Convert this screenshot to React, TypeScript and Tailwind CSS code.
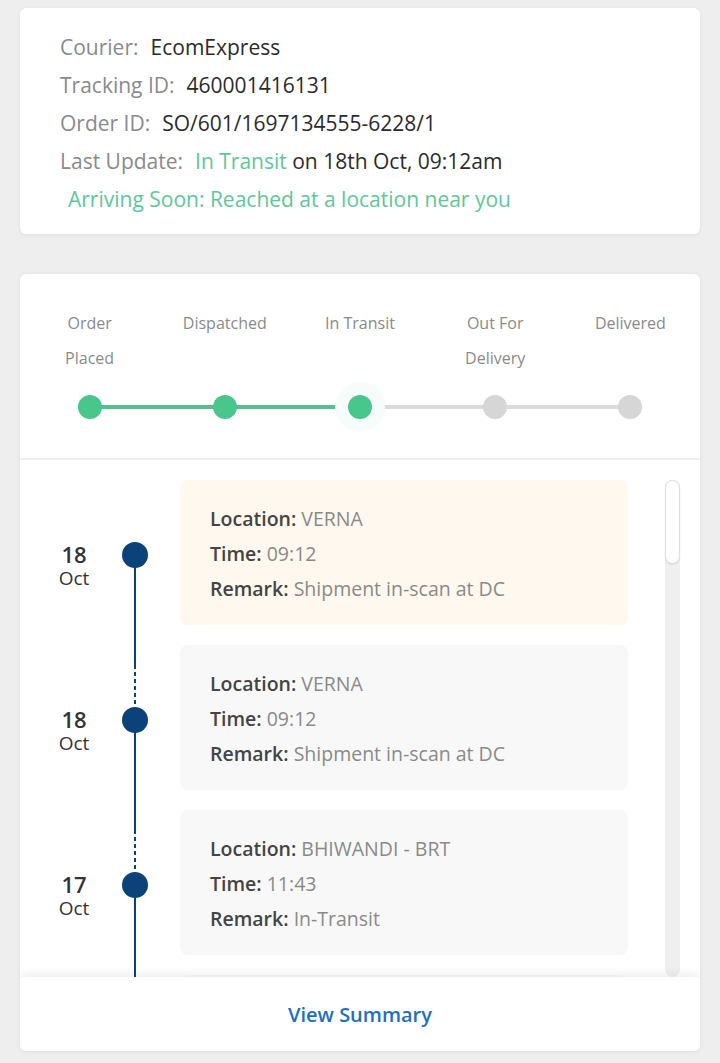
const steps = [
  ["Order", "Placed"],
  ["Dispatched"],
  ["In Transit"],
  ["Out For", "Delivery"],
  ["Delivered"],
];

const current = 2;

const events = [
  { day: "18", month: "Oct", location: "VERNA", time: "09:12", remark: "Shipment in-scan at DC", active: true },
  { day: "18", month: "Oct", location: "VERNA", time: "09:12", remark: "Shipment in-scan at DC", active: false },
  { day: "17", month: "Oct", location: "BHIWANDI - BRT", time: "11:43", remark: "In-Transit", active: false },
  { day: "17", month: "Oct", location: "BHIWANDI - BRT", time: "08:20", remark: "Shipment in-scan", active: false },
];

function InfoRow({ label, children }: { label: string; children: React.ReactNode }) {
  return (
    <p className="leading-[38px]">
      <span className="text-[#8a8a8a]">{label}:</span>
      <span className="ml-3 font-medium text-[#2b2b2b]">{children}</span>
    </p>
  );
}

export default function App() {
  return (
    <main className="min-h-screen bg-[#eeeeee] px-5 pt-2 pb-[11px] font-['Open_Sans',sans-serif]">
      <section className="rounded-md bg-white pt-[20px] pb-[16px] pl-10 text-[21px] shadow-[0_1px_4px_rgba(0,0,0,0.07)]">
        <InfoRow label="Courier">EcomExpress</InfoRow>
        <InfoRow label="Tracking ID">460001416131</InfoRow>
        <InfoRow label="Order ID">SO/601/1697134555-6228/1</InfoRow>
        <InfoRow label="Last Update">
          <span className="text-[#5cc89a]">In Transit</span> on 18th Oct, 09:12am
        </InfoRow>
        <p className="pl-2 leading-[38px] font-medium text-[#5cc89a]">
          Arriving Soon: Reached at a location near you
        </p>
      </section>

      <section className="mt-10 overflow-hidden rounded-md bg-white shadow-[0_1px_4px_rgba(0,0,0,0.07)]">
        <div className="grid grid-cols-5 px-[2px] pt-8 pb-[39px]">
          {steps.map((lines, i) => (
            <div key={i} className="flex flex-col items-center">
              <div className="h-[70px] text-center text-[16px] leading-[35px] text-[#8a8a8a]">
                {lines.map((l) => (
                  <div key={l}>{l}</div>
                ))}
              </div>
              <div className="relative mt-[19px] h-6 w-full">
                {i > 0 && (
                  <div
                    className={`absolute top-[10px] left-0 h-1 w-1/2 ${i <= current ? "bg-[#52c08f]" : "bg-[#dcdcdc]"}`}
                  />
                )}
                {i < steps.length - 1 && (
                  <div
                    className={`absolute top-[10px] right-0 h-1 w-1/2 ${i < current ? "bg-[#52c08f]" : "bg-[#dcdcdc]"}`}
                  />
                )}
                {i === current && (
                  <div className="absolute top-[-13px] left-1/2 h-[50px] w-[50px] -translate-x-1/2 rounded-full bg-[#f6fcf9]" />
                )}
                <div
                  className={`absolute top-0 left-1/2 h-6 w-6 -translate-x-1/2 rounded-full ${i <= current ? "bg-[#48c68c]" : "bg-[#d6d6d6]"}`}
                />
              </div>
            </div>
          ))}
        </div>

        <div className="h-[2px] bg-[#eeeeee]" />

        <div className="relative h-[517px] overflow-hidden">
          <div className="pt-5 pl-[19px]">
            {events.map((e, i) => (
              <div key={i} className="flex">
                <div className="w-[70px] pt-[62px] text-center text-[#333]">
                  <div className="text-[22px] leading-6 font-semibold">{e.day}</div>
                  <div className="text-[19px] leading-6 font-medium">{e.month}</div>
                </div>
                <div className="relative w-[71px]">
                  {i > 0 && (
                    <>
                      <div className="absolute top-0 left-[25px] h-[20px] w-[2px] bg-[#0b4279]" />
                      <div className="absolute top-[20px] left-[25px] h-[42px] w-[2px] bg-[repeating-linear-gradient(to_bottom,#0b4279_0_4px,transparent_4px_7px)]" />
                    </>
                  )}
                  <div className="absolute top-[62px] left-[13px] h-[26px] w-[26px] rounded-full bg-[#0b4279]" />
                  <div className="absolute top-[80px] bottom-0 left-[25px] w-[2px] bg-[#0b4279]" />
                </div>
                <div className="pb-5">
                  <div
                    className={`w-[448px] rounded-lg px-[30px] pt-[21px] pb-[19px] text-[19.5px] leading-[35px] ${e.active ? "bg-[#fff8ee]" : "bg-[#f8f8f8]"}`}
                  >
                    <p>
                      <span className="font-semibold text-[#444]">Location:</span>{" "}
                      <span className="text-[#8a8a8a]">{e.location}</span>
                    </p>
                    <p>
                      <span className="font-semibold text-[#444]">Time:</span>{" "}
                      <span className="text-[#8a8a8a]">{e.time}</span>
                    </p>
                    <p>
                      <span className="font-semibold text-[#444]">Remark:</span>{" "}
                      <span className="text-[#8a8a8a]">{e.remark}</span>
                    </p>
                  </div>
                </div>
              </div>
            ))}
          </div>

          <div className="absolute top-5 right-5 bottom-0 w-[15px] rounded-full bg-[#efefef]">
            <div className="h-[84px] rounded-full border border-[#dddddd] bg-white shadow-[0_1px_2px_rgba(0,0,0,0.08)]" />
          </div>
        </div>

        <div className="relative flex h-[74px] items-center justify-center bg-white pt-[2px] shadow-[0_-4px_8px_rgba(0,0,0,0.06)]">
          <span className="text-[20px] font-semibold text-[#1d6fc2]">View Summary</span>
        </div>
      </section>
    </main>
  );
}
